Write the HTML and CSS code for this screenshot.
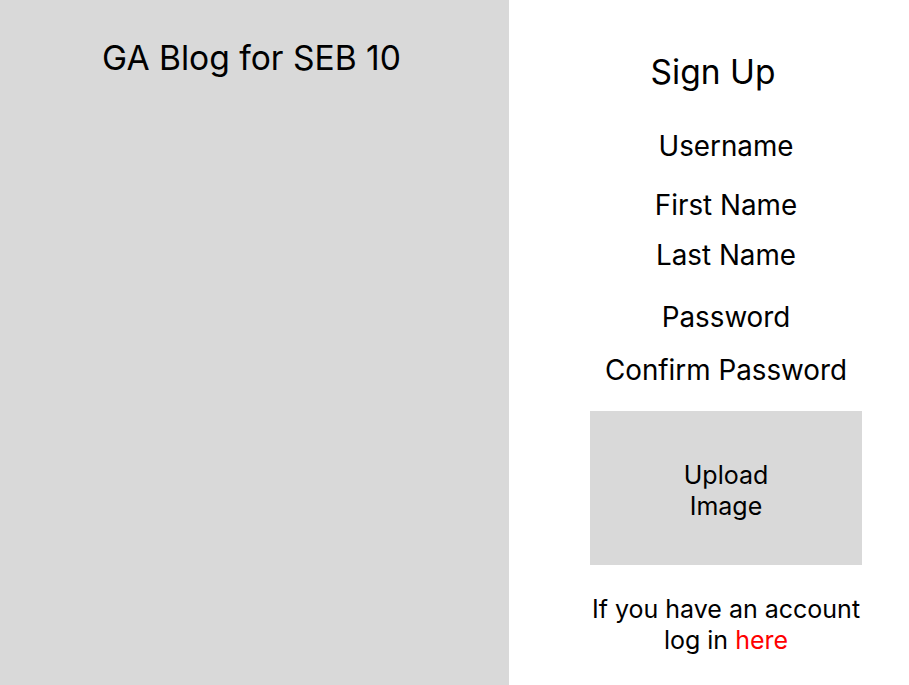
FILE: index.html
```html
<!DOCTYPE html>
<html>
<head>
<meta charset="utf-8">
<link rel="stylesheet" href="styles.css">
</head>
<body>
<div class="page">
  <section class="brand">
    <h1 class="brand-title">GA Blog for SEB 10</h1>
  </section>
  <section class="signup">
    <h2 class="signup-title">Sign Up</h2>
    <div class="field f-username">Username</div>
    <div class="field f-first">First Name</div>
    <div class="field f-last">Last Name</div>
    <div class="field f-pass">Password</div>
    <div class="field f-confirm">Confirm Password</div>
    <div class="upload">Upload<br>Image</div>
    <p class="login">If you have an account<br>log in <a class="login-link">here</a></p>
  </section>
</div>
</body>
</html>
```
FILE: styles.css
```css
html, body {
  margin: 0;
  padding: 0;
  background: #ffffff;
}
body {
  font-family: Inter, "Noto Sans", sans-serif;
  color: #000000;
}
.page {
  display: flex;
  width: 909px;
  height: 685px;
}
.brand {
  width: 509px;
  background: #d9d9d9;
  display: flex;
  flex-direction: column;
  align-items: center;
}
.brand-title {
  margin: 38px 0 0 -6px;
  font-size: 33.6px;
  font-weight: 400;
  line-height: 40px;
}
.signup {
  flex: 1;
  display: flex;
  flex-direction: column;
  align-items: center;
  padding-left: 34px;
  padding-right: 0;
}
.signup-title {
  margin: 52px 0 0 -26px;
  font-size: 33.5px;
  font-weight: 400;
  line-height: 40px;
}
.field {
  font-size: 27.8px;
  line-height: 32px;
}
.f-username { margin-top: 38px; }
.f-first { margin-top: 27px; }
.f-last { margin-top: 18px; }
.f-pass { margin-top: 30px; }
.f-confirm { margin-top: 21px; }
.upload {
  box-sizing: border-box;
  margin-top: 25px;
  width: 272px;
  height: 154px;
  padding-top: 6px;
  background: #d9d9d9;
  display: flex;
  align-items: center;
  justify-content: center;
  text-align: center;
  font-size: 25px;
  line-height: 31px;
}
.login {
  margin: 29px 0 0 0;
  text-align: center;
  font-size: 25px;
  line-height: 31px;
}
.login-link {
  color: #ff0000;
}
```
